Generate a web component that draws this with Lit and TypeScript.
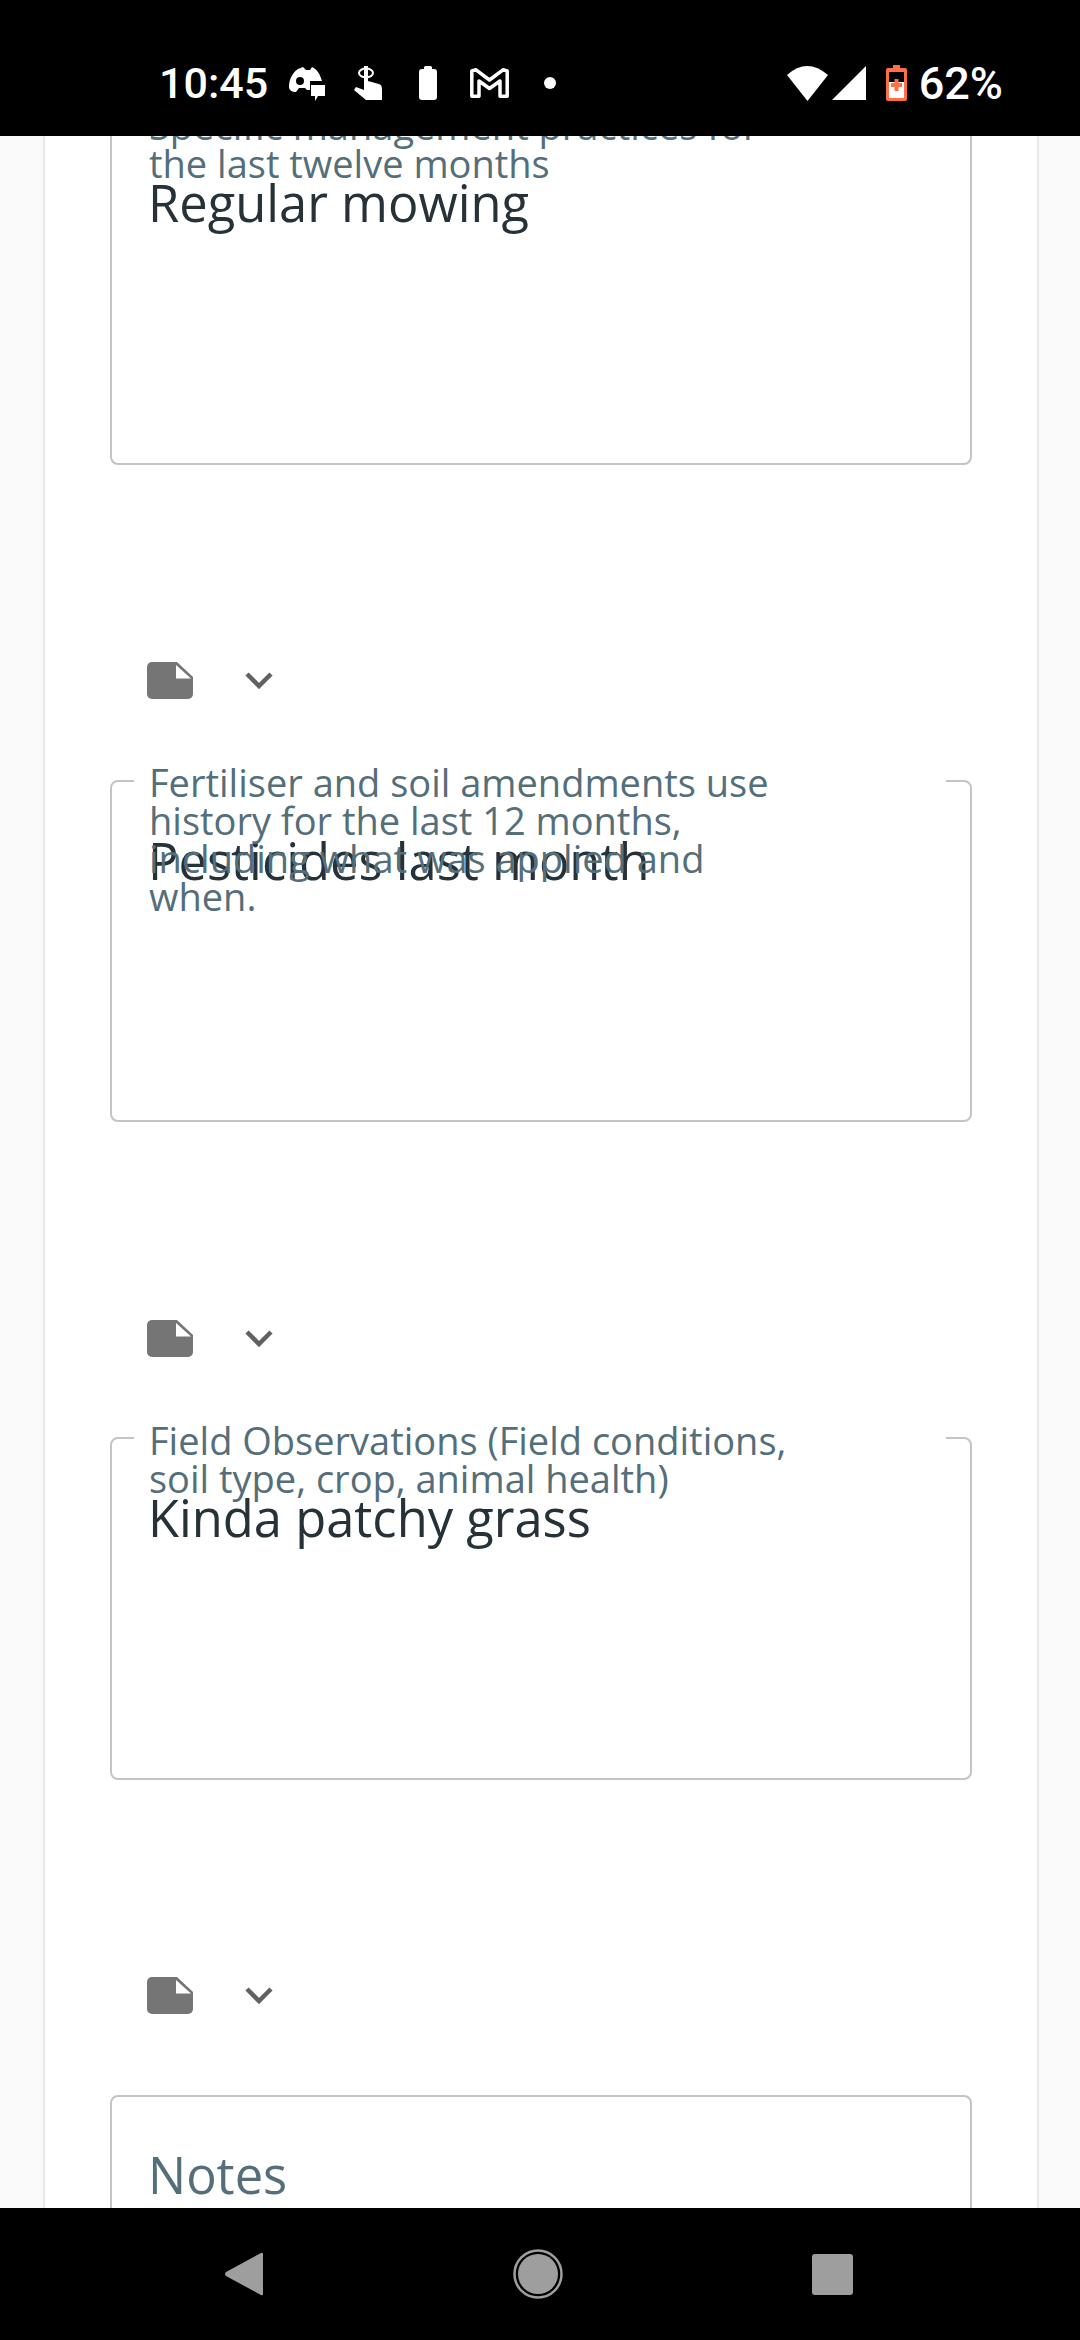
import { LitElement, html, css } from "lit";
import { customElement } from "lit/decorators.js";

const FIELDS = [
  { label: "Specific management practices for the last twelve months", value: "Regular mowing" },
  { label: "Fertiliser and soil amendments use history for the last 12 months, including what was applied and when.", value: "Pesticides last month" },
  { label: "Field Observations (Field conditions, soil type, crop, animal health)", value: "Kinda patchy grass" },
];

@customElement("app-root")
export class AppRoot extends LitElement {
  static styles = css`
    :host { display: flex; flex-direction: column; width: 1080px; height: 2340px; overflow: hidden; background: #fafafa; font-family: "Open Sans", sans-serif; }
    .status { flex: 0 0 136px; box-sizing: border-box; background: #000; color: #fff; display: flex; align-items: center; position: relative; z-index: 2; padding: 30px 77px 0 159px; justify-content: space-between; }
    .group { display: flex; align-items: center; }
    .time, .pct { font-family: Roboto, sans-serif; line-height: 1; }
    .time { font-size: 43px; font-weight: 500; margin-right: 21px; }
    .pct { font-size: 45px; font-weight: 500; margin-left: 12px; }
    .discord { margin-right: 29px; }
    .touch { margin-right: 36px; }
    .batt { margin-right: 33px; }
    .gmail { margin-right: 35px; }
    .wifi { margin-right: 4px; }
    .signal { margin-right: 20px; }
    .main { flex: 1 1 auto; min-height: 0; overflow: hidden; }
    .card { margin: -14px 41px 0 43px; background: #fff; border-left: 2px solid #e8e8e8; border-right: 2px solid #e8e8e8; padding: 0 65px 0 65px; }
    .field { position: relative; height: 342.5px; border: 2px solid #c4c4c4; border-radius: 8px; box-sizing: border-box; padding: 49px 36px 0; }
    .notch { position: absolute; left: 22px; top: -2px; width: 812px; height: 2px; background: #fff; }
    .label { position: absolute; left: 37px; top: -18.5px; width: 650px; color: #546e7a; font-size: 38px; line-height: 38px; }
    .value { color: #263238; font-size: 50.67px; line-height: 60px; }
    .tools { display: flex; align-items: center; height: 315px; padding: 117px 0 0 37px; box-sizing: border-box; }
    .doc { width: 46px; height: 37px; display: block; }
    .chev { width: 28px; height: 17px; display: block; margin-left: 52px; }
    .notes { padding-top: 48px; }
    .placeholder { color: #546e7a; font-size: 50.67px; line-height: 60px; }
    .nav { flex: 0 0 132px; background: #000; display: flex; position: relative; z-index: 2; align-items: center; justify-content: space-between; padding: 0 227px 0 225px; box-sizing: border-box; }
    svg { display: block; }
  `;

  private doc() {
    return html`<svg class="doc" viewBox="0 0 46 37"><path fill="#757575" d="M5 0H30L46 15V32A5 5 0 0 1 41 37H5A5 5 0 0 1 0 32V5A5 5 0 0 1 5 0Z"/><path fill="#fff" d="M29 3L44 16.500H29Z"/></svg>`;
  }

  private chev() {
    return html`<svg class="chev" viewBox="0 0 28 17"><path fill="none" stroke="#616161" stroke-width="4.500" d="M2 2L14 14L26 2"/></svg>`;
  }

  render() {
    return html`
      <div class="status">
        <div class="group">
          <span class="time">10:45</span>
          <svg class="discord" width="36" height="36" viewBox="0 0 36 36"><path fill="#fff" d="M0 22C0 14 4 7 9 4L14 2L17 5H21L23 2C28 4 31 9 33 16H21V25H18L16 23H10L7 27C3 27 0 25 0 22Z"/><circle cx="11" cy="16" r="4" fill="#000"/><path fill="#fff" d="M22 20H36V31H29L26 36V31H22Z"/></svg>
          <svg class="touch" width="29" height="34" viewBox="0 0 29 34"><ellipse cx="12" cy="7" rx="7" ry="4.500" fill="none" stroke="#fff" stroke-width="2"/><path fill="#fff" d="M10 0H14V15L25 18C28 19 28 22 28 24V34H12L0 24L2 21L10 24Z"/></svg>
          <svg class="batt" width="18" height="34" viewBox="0 0 18 34"><path fill="#fff" d="M5 3V1.500Q5 0 6.500 0H11.500Q13 0 13 1.500V3H15Q18 3 18 6V31Q18 34 15 34H3Q0 34 0 31V6Q0 3 3 3Z"/></svg>
          <svg class="gmail" width="39" height="30" viewBox="0 0 39 30"><path fill="none" stroke="#fff" stroke-width="3.500" stroke-linejoin="round" d="M1.800 3V28.200H9V13L19.500 20.500L30 13V28.200H37.200V3L33 1.800L19.500 12L6 1.800Z"/></svg>
          <svg width="12" height="12" viewBox="0 0 12 12"><circle cx="6" cy="6" r="6" fill="#fff"/></svg>
        </div>
        <div class="group">
          <svg class="wifi" width="41" height="35" viewBox="0 0 41 35"><path fill="#fff" d="M0 9Q20 -9 41 9L20.500 35Z"/></svg>
          <svg class="signal" width="34" height="34" viewBox="0 0 34 34"><path fill="#fff" d="M34 0V34H0Z"/></svg>
          <svg width="21" height="36" viewBox="0 0 21 36"><path fill="#ff7043" d="M7 0H14V3H19Q21 3 21 5V34Q21 36 19 36H2Q0 36 0 34V5Q0 3 2 3H7Z"/><rect x="3" y="7" width="15" height="26" fill="#000"/><rect x="3" y="17" width="15" height="16" fill="#fff"/><path fill="#ff7043" d="M8.500 14H12.500V18H16V22H12.500V26H8.500V22H5V18H8.500Z"/></svg>
          <span class="pct">62%</span>
        </div>
      </div>
      <div class="main">
        <div class="card">
          ${FIELDS.map(
            (f) => html`
              <div class="field">
                <span class="notch"></span>
                <div class="value">${f.value}</div>
                <div class="label">${f.label}</div>
              </div>
              <div class="tools">${this.doc()}${this.chev()}</div>
            `
          )}
          <div class="field notes"><div class="placeholder">Notes</div></div>
        </div>
      </div>
      <div class="nav">
        <svg width="38" height="44" viewBox="0 0 38 44"><path fill="#9e9e9e" d="M38 2V42Q38 44 36 43L1 24Q-1 22 1 20L36 1Q38 0 38 2Z"/></svg>
        <svg width="50" height="50" viewBox="0 0 50 50"><circle cx="25" cy="25" r="23.500" fill="none" stroke="#9e9e9e" stroke-width="2.500"/><circle cx="25" cy="25" r="20" fill="#9e9e9e"/></svg>
        <svg width="41" height="41" viewBox="0 0 41 41"><rect width="41" height="41" rx="3" fill="#9e9e9e"/></svg>
      </div>
    `;
  }
}
